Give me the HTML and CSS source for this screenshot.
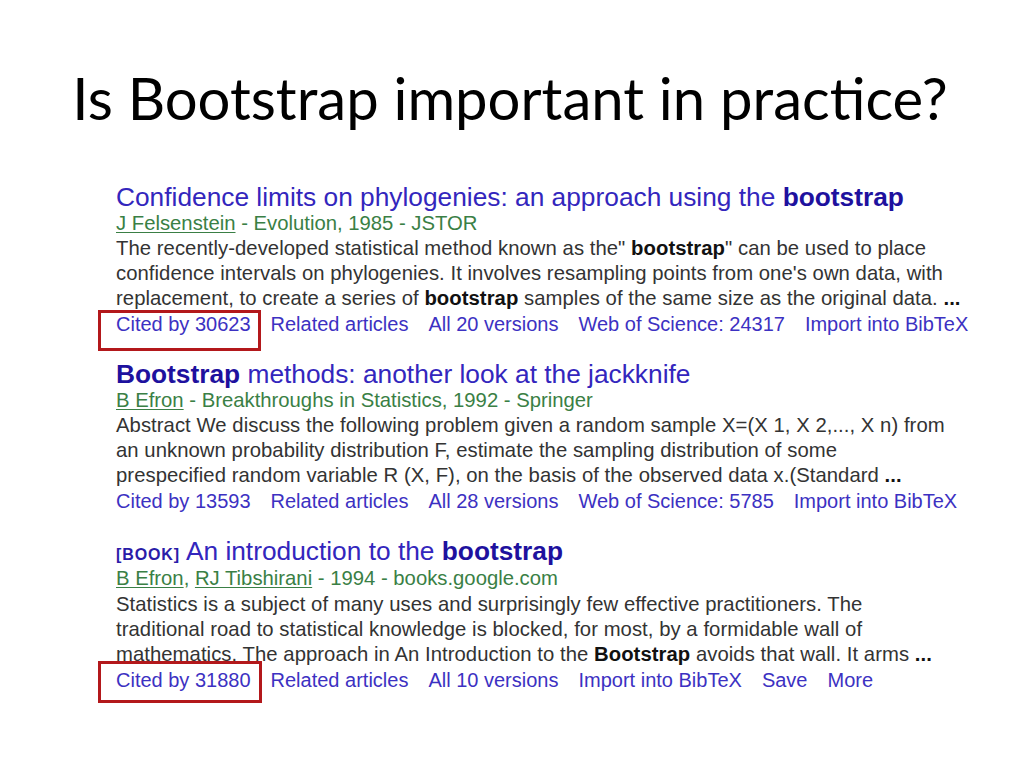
FILE: index.html
```html
<!DOCTYPE html>
<html>
<head>
<meta charset="utf-8">
<link rel="stylesheet" href="styles.css">
</head>
<body>
<div class="slide">
  <h1 class="title">Is Bootstrap important in practice?</h1>
  <div class="results">
    <div class="result">
      <div class="r-title"><a>Confidence limits on phylogenies: an approach using the <b>bootstrap</b></a></div>
      <div class="r-meta"><u>J Felsenstein</u> - Evolution, 1985 - JSTOR</div>
      <div class="r-snip">The recently-developed statistical method known as the" <b>bootstrap</b>" can be used to place<br>confidence intervals on phylogenies. It involves resampling points from one's own data, with<br>replacement, to create a series of <b>bootstrap</b> samples of the same size as the original data. <b>...</b></div>
      <div class="r-links"><span class="cited boxed box1">Cited by 30623</span><span>Related articles</span><span>All 20 versions</span><span>Web of Science: 24317</span><span>Import into BibTeX</span></div>
    </div>
    <div class="result">
      <div class="r-title"><a><b>Bootstrap</b> methods: another look at the jackknife</a></div>
      <div class="r-meta"><u>B Efron</u> - Breakthroughs in Statistics, 1992 - Springer</div>
      <div class="r-snip">Abstract We discuss the following problem given a random sample X=(X 1, X 2,..., X n) from<br>an unknown probability distribution F, estimate the sampling distribution of some<br>prespecified random variable R (X, F), on the basis of the observed data x.(Standard <b>...</b></div>
      <div class="r-links"><span class="cited">Cited by 13593</span><span>Related articles</span><span>All 28 versions</span><span>Web of Science: 5785</span><span>Import into BibTeX</span></div>
    </div>
    <div class="result third">
      <div class="r-title"><span class="tag">[BOOK]</span> <a>An introduction to the <b>bootstrap</b></a></div>
      <div class="r-meta"><u>B Efron</u>, <u>RJ Tibshirani</u> - 1994 - books.google.com</div>
      <div class="r-snip">Statistics is a subject of many uses and surprisingly few effective practitioners. The<br>traditional road to statistical knowledge is blocked, for most, by a formidable wall of<br>mathematics. The approach in An Introduction to the <b>Bootstrap</b> avoids that wall. It arms <b>...</b></div>
      <div class="r-links"><span class="cited boxed box2">Cited by 31880</span><span>Related articles</span><span>All 10 versions</span><span>Import into BibTeX</span><span>Save</span><span>More</span></div>
    </div>
  </div>
</div>
</body>
</html>
```
FILE: styles.css
```css
html, body {
  margin: 0;
  padding: 0;
  background: #ffffff;
}
.slide {
  width: 1024px;
  height: 768px;
  overflow: hidden;
}
.title {
  margin: 0;
  padding-top: 64px;
  padding-right: 4px;
  text-align: center;
  font-family: Lato, "Liberation Sans", sans-serif;
  font-weight: 400;
  font-size: 58px;
  line-height: 68px;
  color: #000;
}
.results {
  margin-top: 52px;
  padding-left: 116px;
  font-family: "Liberation Sans", Arial, sans-serif;
}
.result {
  margin-bottom: 24px;
}
.r-title {
  font-size: 26.3px;
  line-height: 26px;
  color: #3326bd;
}
.r-title b {
  color: #1e119e;
}
.tag {
  font-size: 16px;
  font-weight: bold;
  line-height: 1;
  color: #2a1ca8;
  letter-spacing: 0.9px;
}
.r-meta {
  font-size: 20.3px;
  line-height: 26px;
  color: #3a7f45;
}
.third .r-meta {
  line-height: 28px;
}
.r-meta u {
  text-decoration-thickness: 1px;
  text-underline-offset: 2px;
}
.r-snip {
  font-size: 20.3px;
  line-height: 25px;
  color: #333333;
  letter-spacing: 0.05px;
}
.r-snip b {
  color: #111111;
}
.r-links {
  font-size: 20px;
  line-height: 26px;
  color: #3c31c2;
  display: flex;
  gap: 20px;
}
.boxed {
  position: relative;
}
.boxed::after {
  content: "";
  position: absolute;
  border: 3px solid #b3181b;
}
.box1::after {
  left: -18px;
  top: -1px;
  width: 157px;
  height: 35px;
}
.box2::after {
  left: -18px;
  top: -6px;
  width: 158px;
  height: 36px;
}
```
